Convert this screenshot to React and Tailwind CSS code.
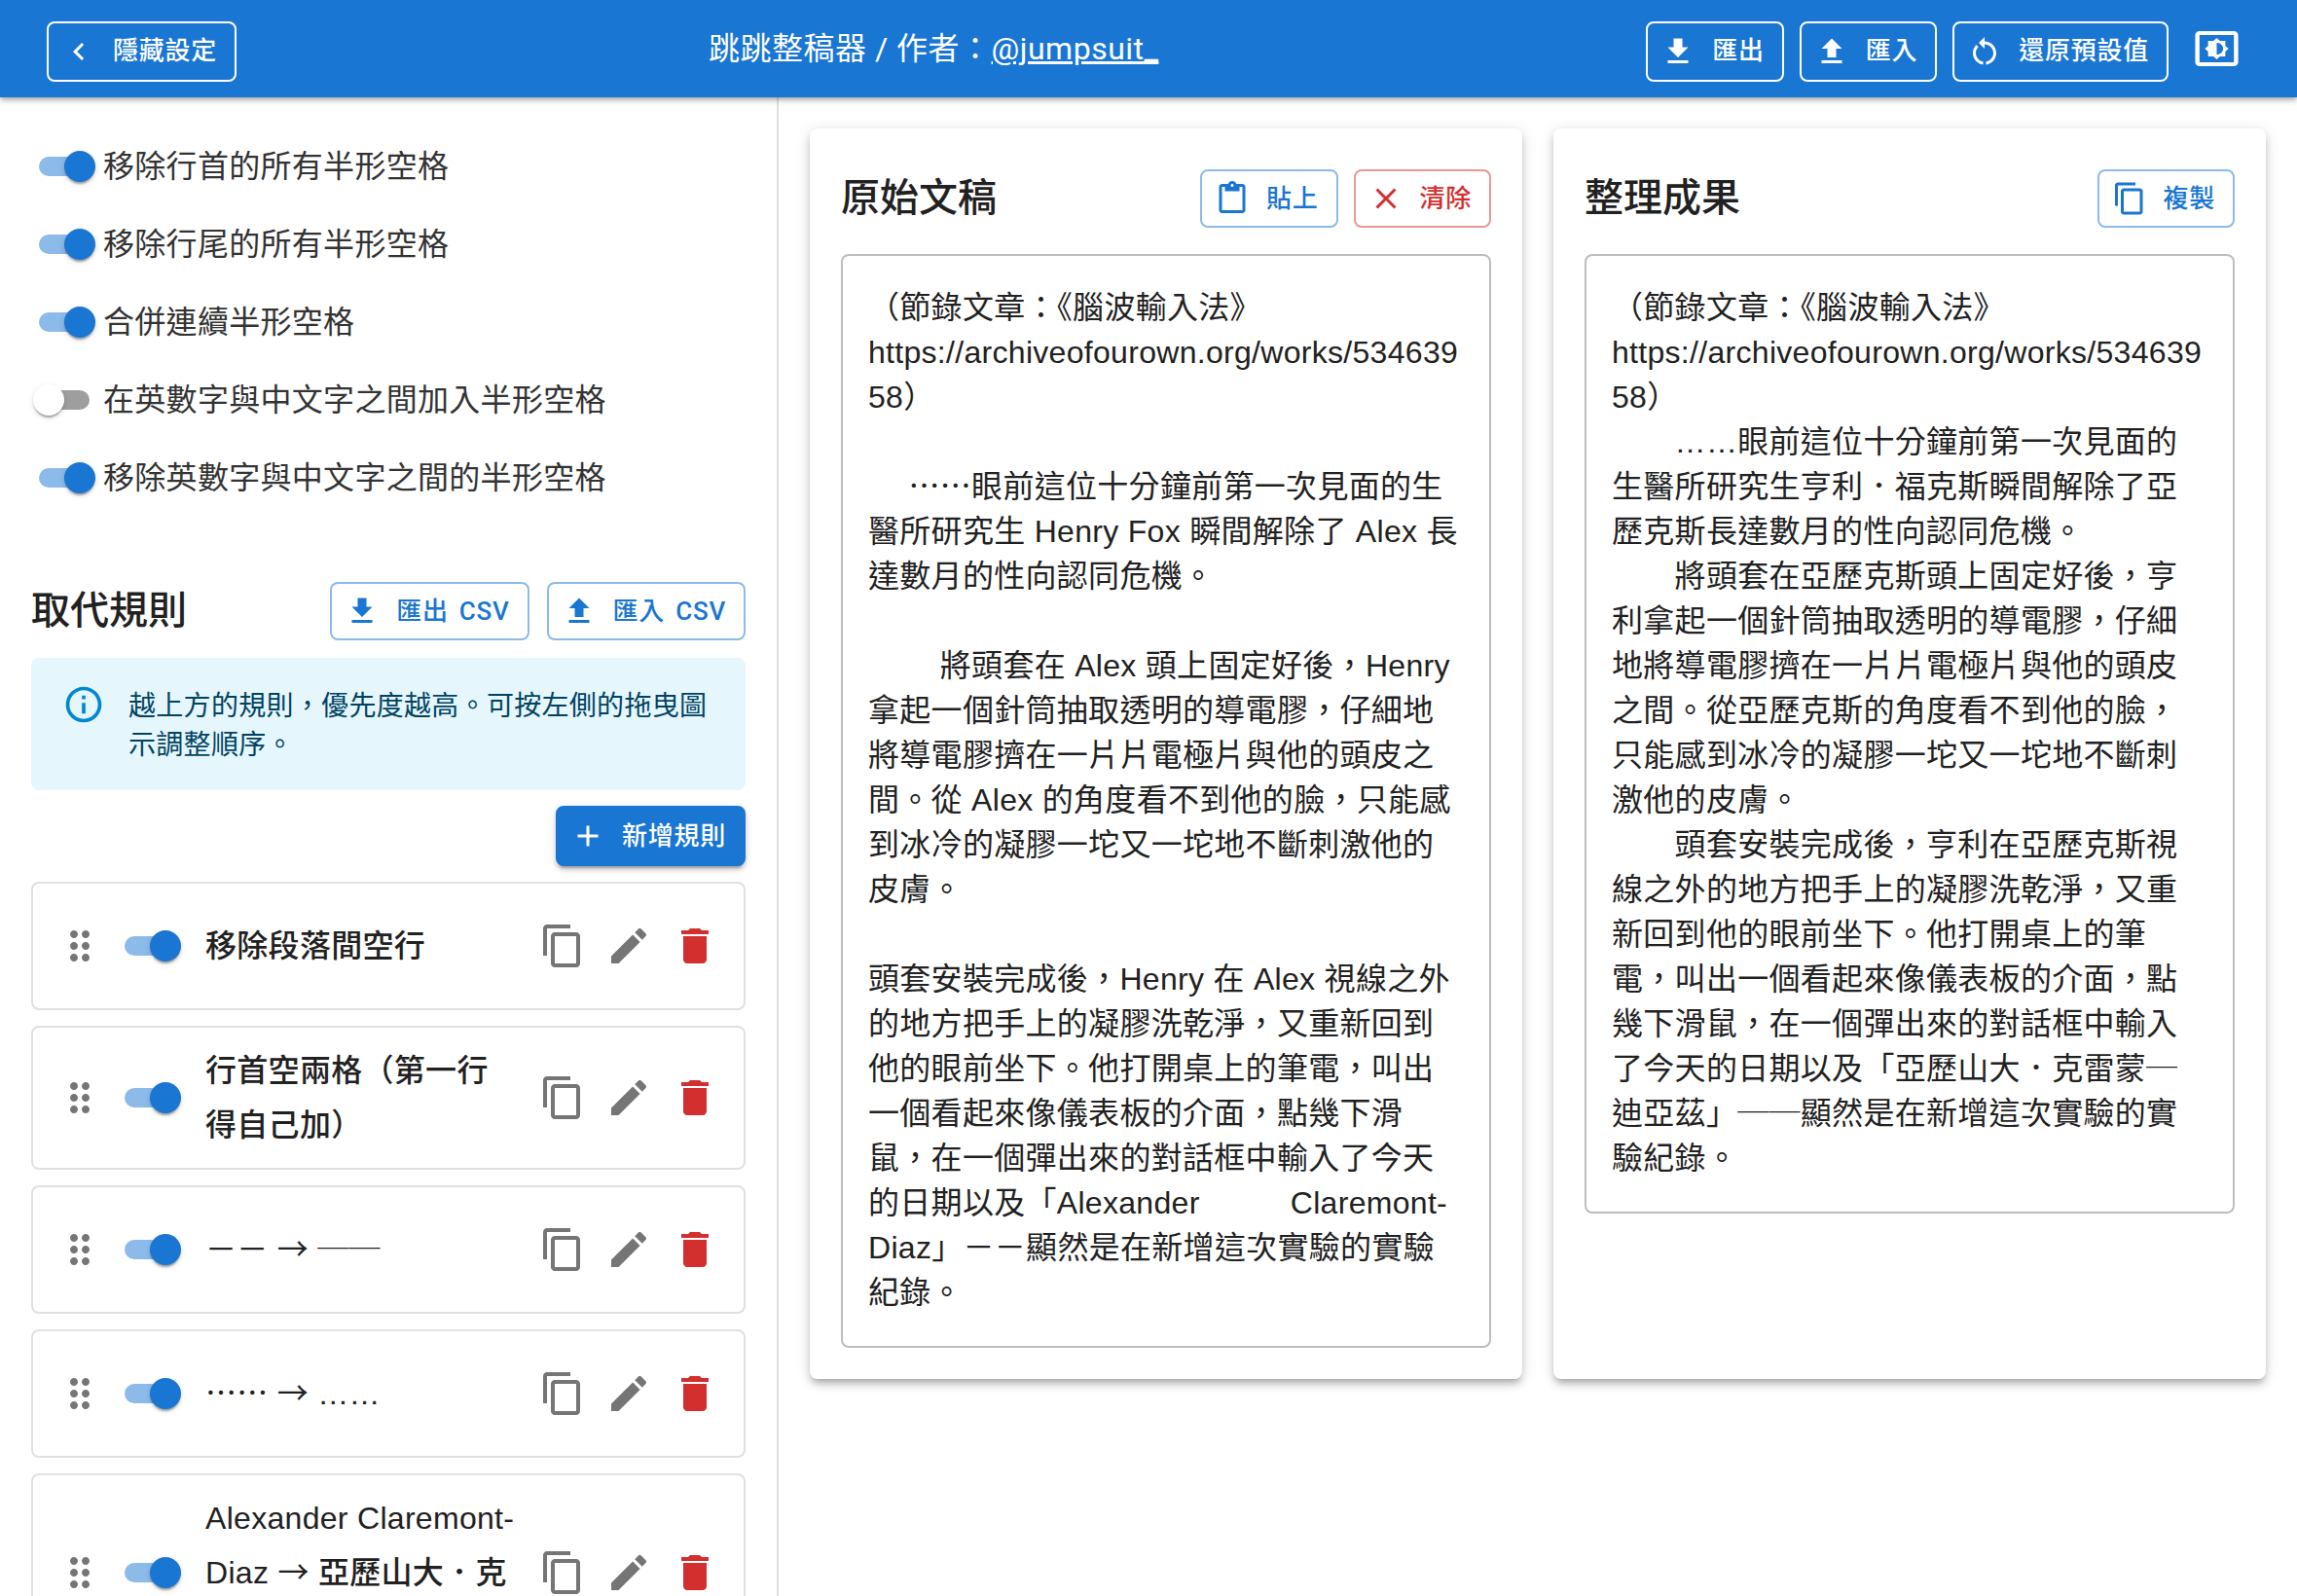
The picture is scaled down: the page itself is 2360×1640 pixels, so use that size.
const P = {
  copy: "M16 1H4c-1.1 0-2 .9-2 2v14h2V3h12V1zm3 4H8c-1.1 0-2 .9-2 2v14c0 1.1.9 2 2 2h11c1.1 0 2-.9 2-2V7c0-1.1-.9-2-2-2zm0 16H8V7h11v14z",
  edit: "M3 17.25V21h3.75L17.81 9.94l-3.75-3.75L3 17.25zM20.71 7.04c.39-.39.39-1.02 0-1.41l-2.34-2.34a.9959.9959 0 0 0-1.41 0l-1.83 1.83 3.75 3.75 1.83-1.83z",
  del: "M6 19c0 1.1.9 2 2 2h8c1.1 0 2-.9 2-2V7H6v12zM19 4h-3.5l-1-1h-5l-1 1H5v2h14V4z",
  down: "M5 20h14v-2H5v2zM19 9h-4V3H9v6H5l7 7 7-7z",
  up: "M5 20h14v-2H5v2zm0-10h4v6h6v-6h4l-7-7-7 7z",
  restart: "M12 5V2L8 6l4 4V7c3.31 0 6 2.69 6 6 0 2.97-2.17 5.43-5 5.91v2.02c3.95-.49 7-3.85 7-7.93 0-4.42-3.58-8-8-8zm-6 8c0-1.65.67-3.15 1.76-4.24L6.34 7.34C4.9 8.79 4 10.79 4 13c0 4.08 3.05 7.44 7 7.93v-2.02c-2.83-.48-5-2.94-5-5.91z",
  add: "M19 13h-6v6h-2v-6H5v-2h6V5h2v6h6v2z",
  close: "M19 6.41 17.59 5 12 10.59 6.41 5 5 6.41 10.59 12 5 17.59 6.41 19 12 13.41 17.59 19 19 17.59 13.41 12z",
  left: "M15.41 7.41 14 6l-6 6 6 6 1.41-1.41L10.83 12z",
  paste: "M19 2h-4.18C14.4.84 13.3 0 12 0c-1.3 0-2.4.84-2.82 2H5c-1.1 0-2 .9-2 2v16c0 1.1.9 2 2 2h14c1.1 0 2-.9 2-2V4c0-1.1-.9-2-2-2zm-7 0c.55 0 1 .45 1 1s-.45 1-1 1-1-.45-1-1 .45-1 1-1zm7 18H5V4h2v3h10V4h2v16z",
  info: "M11 7h2v2h-2zm0 4h2v6h-2zm1-9C6.48 2 2 6.48 2 12s4.48 10 10 10 10-4.48 10-10S17.52 2 12 2zm0 18c-4.41 0-8-3.59-8-8s3.59-8 8-8 8 3.59 8 8-3.59 8-8 8z",
  theme: "M20 3H4c-1.11 0-2 .89-2 2v14c0 1.11.89 2 2 2h16c1.11 0 2-.89 2-2V5c0-1.11-.89-2-2-2zm0 16.01H4V4.99h16v14.02zM8 16h2.5l1.5 1.5 1.5-1.5H16v-2.5l1.5-1.5-1.5-1.5V8h-2.5L12 6.5 10.5 8H8v2.5L6.5 12 8 13.5V16zm4-7c1.66 0 3 1.34 3 3s-1.34 3-3 3V9z",
  drag: "M11 18c0 1.1-.9 2-2 2s-2-.9-2-2 .9-2 2-2 2 .9 2 2zm-2-8c-1.1 0-2 .9-2 2s.9 2 2 2 2-.9 2-2-.9-2-2-2zm0-6c-1.1 0-2 .9-2 2s.9 2 2 2 2-.9 2-2-.9-2-2-2zm6 4c1.1 0 2-.9 2-2s-.9-2-2-2-2 .9-2 2 .9 2 2 2zm0 2c-1.1 0-2 .9-2 2s.9 2 2 2 2-.9 2-2-.9-2-2-2zm0 6c-1.1 0-2 .9-2 2s.9 2 2 2 2-.9 2-2-.9-2-2-2z",
};

function Icon({ d, className, stretch }) {
  return (
    <svg viewBox="0 0 24 24" fill="currentColor" className={className} preserveAspectRatio={stretch ? "none" : undefined}>
      <path d={d} />
    </svg>
  );
}

function Btn({ icon, children, tone = "white", h = "h-[60px]" }) {
  const tones = {
    white: "border-white text-white",
    blue: "border-[#8cbae9] text-[#1976d2]",
    red: "border-[#e99797] text-[#d32f2f]",
    solid: "border-[#1976d2] bg-[#1976d2] text-white shadow-[0_6px_2px_-4px_rgba(0,0,0,0.2),0_4px_4px_0_rgba(0,0,0,0.14),0_2px_10px_0_rgba(0,0,0,0.12)]",
  };
  return (
    <div className={`flex items-center shrink-0 rounded-lg border-2 pl-[13px] pr-[18px] gap-[17px] ${h} ${tones[tone]} font-['Roboto','Noto_Sans_CJK_TC',sans-serif] text-[26px] font-medium tracking-[0.74px] [word-spacing:4px] whitespace-nowrap`}>
      <Icon d={icon} className="w-9 h-9 shrink-0" />
      <span>{children}</span>
    </div>
  );
}

function Toggle({ on = true }) {
  return (
    <div className="relative w-16 h-8 shrink-0">
      <div className={`absolute left-1.5 right-1.5 top-1.5 h-5 rounded-full ${on ? "bg-[#8cbae9]" : "bg-[#9e9e9e]"}`} />
      <div className={`absolute top-0 w-8 h-8 rounded-full shadow-[0_4px_2px_-2px_rgba(0,0,0,0.2),0_2px_2px_0_rgba(0,0,0,0.14),0_2px_6px_0_rgba(0,0,0,0.12)] ${on ? "right-0 bg-[#1976d2]" : "left-0 bg-white"}`} />
    </div>
  );
}

function OptionRow({ on, children }) {
  return (
    <div className="flex items-center h-20 pl-0.5">
      <Toggle on={on} />
      <span className="ml-2 text-[32px] tracking-[0.3px] text-[#333333] font-['Roboto','Noto_Sans_CJK_TC',sans-serif]">{children}</span>
    </div>
  );
}

function IconAction({ d, cls }) {
  return (
    <div className={`p-2.5 shrink-0 ${cls}`}>
      <Icon d={d} className="w-12 h-12" />
    </div>
  );
}

function Cjk({ children }) {
  return <span className="font-['Noto_Sans_CJK_TC',sans-serif] font-normal leading-none">{children}</span>;
}

function Rule({ children, medium }) {
  return (
    <div className="flex items-center min-h-[132px] rounded-lg border-2 border-[#e0e0e0] py-4 pl-6 pr-4 shrink-0">
      <Icon d={P.drag} className="w-12 h-12 shrink-0 text-[#757575]" />
      <div className="ml-4"><Toggle /></div>
      <div className={`ml-[25px] w-[318px] text-[32px] leading-[56px] tracking-[0.3px] text-[#212121] font-['Liberation_Sans','Noto_Sans_CJK_TC',sans-serif] ${medium ? "font-medium" : ""}`}>
        {children}
      </div>
      <div className="ml-auto flex items-center">
        <IconAction d={P.copy} cls="text-[#757575]" />
        <IconAction d={P.edit} cls="text-[#757575]" />
        <IconAction d={P.del} cls="text-[#d32f2f]" />
      </div>
    </div>
  );
}

function Pane({ title, actions, children }) {
  return (
    <div className="flex-1 rounded-lg bg-white p-8 shadow-[0_6px_6px_-4px_rgba(0,0,0,0.2),0_6px_8px_0_rgba(0,0,0,0.14),0_2px_16px_0_rgba(0,0,0,0.12)]">
      <div className="flex items-center justify-between h-[60px] mt-[10px]">
        <h2 className="text-[40px] font-medium text-[#212121] font-['Roboto','Noto_Sans_CJK_TC',sans-serif]">{title}</h2>
        <div className="flex gap-4">{actions}</div>
      </div>
      <div className="mt-[27px] rounded-lg border-2 border-[#bdbdbd] px-[26px] pt-[30px] pb-[32px] text-[32px] leading-[46px] tracking-[0.3px] text-[#212121] whitespace-pre-wrap [overflow-wrap:anywhere] font-['Liberation_Sans','Noto_Sans_CJK_TC',sans-serif]">
        {children}
      </div>
    </div>
  );
}

export default function App() {
  return (
    <div className="w-[2360px] h-[1640px] overflow-hidden flex flex-col bg-white">
      <header className="relative z-10 h-[100px] shrink-0 bg-[#1976d2] flex items-center pl-12 pr-[56px] text-white shadow-[0_2px_4px_-1px_rgba(0,0,0,0.2),0_4px_5px_0_rgba(0,0,0,0.14),0_1px_10px_0_rgba(0,0,0,0.12)]">
        <div className="pt-[5px]"><Btn icon={P.left} h="h-[62px]">隱藏設定</Btn></div>
        <div className="ml-[485px] text-[32px] tracking-[0.5px] font-['Roboto','Noto_Sans_CJK_TC',sans-serif] whitespace-nowrap">
          跳跳整稿器 / 作者：<span className="underline">@jumpsuit_ </span>
        </div>
        <div className="ml-auto flex items-center gap-4 pt-[5px]">
          <Btn icon={P.down} h="h-[62px]">匯出</Btn>
          <Btn icon={P.up} h="h-[62px]">匯入</Btn>
          <Btn icon={P.restart} h="h-[62px]">還原預設值</Btn>
        </div>
        <Icon d={P.theme} stretch className="ml-[23px] w-[53px] h-12 shrink-0" />
      </header>

      <div className="flex flex-1 min-h-0">
        <aside className="w-[800px] shrink-0 border-r-2 border-[#e0e0e0] overflow-hidden px-8 pt-[31px]">
          <OptionRow>移除行首的所有半形空格</OptionRow>
          <OptionRow>移除行尾的所有半形空格</OptionRow>
          <OptionRow>合併連續半形空格</OptionRow>
          <OptionRow on={false}>在英數字與中文字之間加入半形空格</OptionRow>
          <OptionRow>移除英數字與中文字之間的半形空格</OptionRow>

          <div className="mt-[67px] flex items-center justify-between">
            <h2 className="text-[40px] font-medium text-[#212121] font-['Roboto','Noto_Sans_CJK_TC',sans-serif]">取代規則</h2>
            <div className="flex gap-[18px]">
              <Btn icon={P.down} tone="blue">匯出 CSV</Btn>
              <Btn icon={P.up} tone="blue">匯入 CSV</Btn>
            </div>
          </div>

          <div className="mt-[18px] flex rounded-lg bg-[#e5f6fd] px-8 py-3">
            <Icon d={P.info} className="w-11 h-11 mt-[14px] shrink-0 text-[#0288d1]" />
            <p className="ml-6 pt-[18px] pb-[14px] text-[28px] leading-10 tracking-[0.3px] text-[#014361] font-['Roboto','Noto_Sans_CJK_TC',sans-serif]">
              越上方的規則，優先度越高。可按左側的拖曳圖示調整順序。
            </p>
          </div>

          <div className="mt-4 flex justify-end">
            <Btn icon={P.add} tone="solid" h="h-[62px]">新增規則</Btn>
          </div>

          <div className="mt-4 flex flex-col gap-4">
            <Rule medium>移除段落間空行</Rule>
            <Rule medium>行首空兩格（第一行得自己加）</Rule>
            <Rule>－－ <Cjk>→</Cjk> <Cjk>──</Cjk></Rule>
            <Rule>⋯⋯ <Cjk>→</Cjk> ……</Rule>
            <Rule medium>Alexander Claremont-Diaz <Cjk>→</Cjk> 亞歷山大．克雷蒙－迪亞茲</Rule>
          </div>
        </aside>

        <main className="flex-1 min-w-0 px-8 pt-8">
          <div className="flex items-stretch gap-8">
            <Pane
              title="原始文稿"
              actions={
                <>
                  <Btn icon={P.paste} tone="blue">貼上</Btn>
                  <Btn icon={P.close} tone="red">清除</Btn>
                </>
              }
            >
              {"（節錄文章：《腦波輸入法》\nhttps://archiveofourown.org/works/53463958）\n\n　 ⋯⋯眼前這位十分鐘前第一次見面的生醫所研究生 Henry Fox 瞬間解除了 Alex 長達數月的性向認同危機。\n\n　　 將頭套在 Alex 頭上固定好後，Henry 拿起一個針筒抽取透明的導電膠，仔細地將導電膠擠在一片片電極片與他的頭皮之間。從 Alex 的角度看不到他的臉，只能感到冰冷的凝膠一坨又一坨地不斷刺激他的皮膚。\n\n頭套安裝完成後，Henry 在 Alex 視線之外的地方把手上的凝膠洗乾淨，又重新回到他的眼前坐下。他打開桌上的筆電，叫出一個看起來像儀表板的介面，點幾下滑鼠，在一個彈出來的對話框中輸入了今天的日期以及「"}
              <span className="[word-spacing:84px]">Alexander Claremont-</span>
              {"Diaz」－－顯然是在新增這次實驗的實驗紀錄。"}
            </Pane>
            <Pane title="整理成果" actions={<Btn icon={P.copy} tone="blue">複製</Btn>}>
              {"（節錄文章：《腦波輸入法》\nhttps://archiveofourown.org/works/53463958）\n　　……眼前這位十分鐘前第一次見面的生醫所研究生亨利．福克斯瞬間解除了亞歷克斯長達數月的性向認同危機。\n　　將頭套在亞歷克斯頭上固定好後，亨利拿起一個針筒抽取透明的導電膠，仔細地將導電膠擠在一片片電極片與他的頭皮之間。從亞歷克斯的角度看不到他的臉，只能感到冰冷的凝膠一坨又一坨地不斷刺激他的皮膚。\n　　頭套安裝完成後，亨利在亞歷克斯視線之外的地方把手上的凝膠洗乾淨，又重新回到他的眼前坐下。他打開桌上的筆電，叫出一個看起來像儀表板的介面，點幾下滑鼠，在一個彈出來的對話框中輸入了今天的日期以及「亞歷山大．克雷蒙"}
              <Cjk>─</Cjk>
              {"迪亞茲」"}
              <Cjk>──</Cjk>
              {"顯然是在新增這次實驗的實驗紀錄。"}
            </Pane>
          </div>
        </main>
      </div>
    </div>
  );
}
